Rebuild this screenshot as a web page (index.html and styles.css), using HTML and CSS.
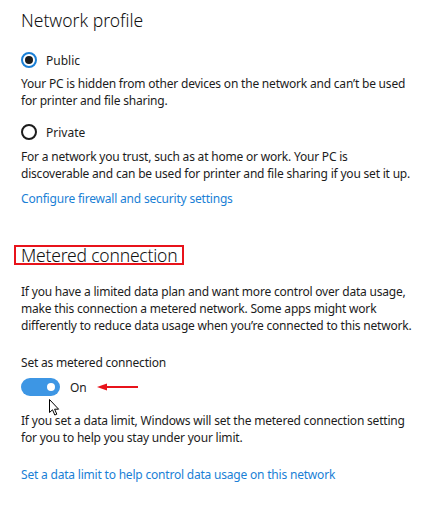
FILE: index.html
```html
<!DOCTYPE html>
<html lang="en">
<head>
    <meta charset="UTF-8">
    <title>Network settings</title>
    <link rel="stylesheet" href="styles.css">
</head>
<body>

<div class="page">
    <h2 class="title">Network profile</h2>

    <div class="radio-row first">
        <span class="radio checked"><span class="dot"></span></span>
        <span class="radio-label">Public</span>
    </div>
    <p class="desc">Your PC is hidden from other devices on the network and can’t be used for printer and file sharing.</p>

    <div class="radio-row second">
        <span class="radio"></span>
        <span class="radio-label">Private</span>
    </div>
    <p class="desc near">For a network you trust, such as at home or work. Your PC is discoverable and can be used for printer and file sharing if you set it up.</p>

    <a class="link" href="#">Configure firewall and security settings</a>

    <h2 class="title metered"><span class="boxed">Metered connection</span></h2>

    <p class="desc intro">If you have a limited data plan and want more control over data usage, make this connection a metered network. Some apps might work differently to reduce data usage when you’re connected to this network.</p>

    <div class="setting-label">Set as metered connection</div>
    <div class="toggle-row">
        <span class="toggle"><span class="knob"></span></span>
        <span class="toggle-state">On</span>
        <svg class="arrow" width="42" height="10" viewBox="0 0 42 10">
            <line x1="8" y1="5" x2="41" y2="5" stroke="#e8131b" stroke-width="2"/>
            <polygon points="0,5 10,1.5 10,8.5" fill="#e8131b"/>
        </svg>
        <svg class="cursor" width="12" height="18" viewBox="0 0 12 18">
            <path d="M0.5 0.5 L0.5 13.5 L3.5 10.8 L5.8 16 L7.8 15.2 L5.6 10.2 L9.6 10.2 Z" fill="#fff" stroke="#000" stroke-width="1" stroke-linejoin="miter"/>
        </svg>
    </div>

    <p class="desc after">If you set a data limit, Windows will set the metered connection setting for you to help you stay under your limit.</p>

    <a class="link last" href="#">Set a data limit to help control data usage on this network</a>
</div>

</body>
</html>
```

FILE: styles.css
```css
body {
    margin: 0;
    background: #ffffff;
    font-family: "Noto Sans", "Open Sans", sans-serif;
    color: #1c1c1c;
}
.page {
    padding: 8px 0 0 21px;
    width: 396px;
}
.title {
    font-weight: 300;
    font-size: 17.5px;
    line-height: 24px;
    margin: 0;
    color: #111;
}
.metered {
    display: flex;
    margin-top: 38px;
}
.boxed {
    border: 2px solid #e8131b;
    padding: 0 5px;
    margin-left: -7px;
    line-height: 16px;
    height: 16px;
    letter-spacing: -0.2px;
}
.radio-row {
    display: flex;
    align-items: center;
    height: 20px;
}
.radio-row.first {
    margin-top: 18px;
}
.radio-row.second {
    margin-top: 13px;
}
.radio {
    width: 12px;
    height: 12px;
    border: 2px solid #1c1c1c;
    border-radius: 50%;
    display: flex;
    align-items: center;
    justify-content: center;
}
.radio.checked {
    border-color: #1a7fd6;
}
.dot {
    width: 8px;
    height: 8px;
    border-radius: 50%;
    background: #1c1c1c;
}
.radio-label {
    margin-left: 9px;
    font-size: 12px;
}
.desc,
.link,
.setting-label {
    font-size: 12px;
    line-height: 17px;
    letter-spacing: -0.2px;
}
.desc {
    margin: 5px 0 0 0;
}
.desc.near {
    margin-top: 6px;
}
.desc.intro {
    margin-top: 18px;
}
.desc.after {
    margin-top: 16px;
}
.link {
    display: block;
    color: #1a7fd6;
    text-decoration: none;
    margin-top: 8px;
}
.link.last {
    margin-top: 20px;
}
.setting-label {
    margin-top: 20px;
}
.toggle-row {
    display: flex;
    align-items: center;
    margin-top: 7px;
    height: 18px;
    position: relative;
}
.toggle {
    width: 39px;
    height: 18px;
    border-radius: 9px;
    background: #3d96e4;
    position: relative;
}
.knob {
    position: absolute;
    right: 5px;
    top: 5px;
    width: 8px;
    height: 8px;
    border-radius: 50%;
    background: #fff;
}
.toggle-state {
    font-size: 12px;
    margin-left: 10px;
}
.arrow {
    margin-left: 10px;
}
.cursor {
    position: absolute;
    left: 28px;
    top: 21px;
}
```
